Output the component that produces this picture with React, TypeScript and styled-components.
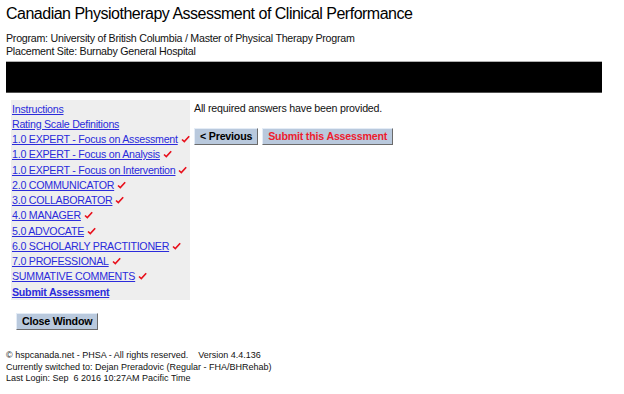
import React from 'react';
import styled, { createGlobalStyle } from 'styled-components';

const GlobalStyle = createGlobalStyle`
  html, body {
    margin: 0;
    padding: 0;
    background: #ffffff;
  }
  body {
    font-family: 'Liberation Sans', Arial, sans-serif;
    color: #000000;
  }
`;

const menuItems: { label: string; done: boolean }[] = [
  { label: 'Instructions', done: false },
  { label: 'Rating Scale Definitions', done: false },
  { label: '1.0 EXPERT - Focus on Assessment', done: true },
  { label: '1.0 EXPERT - Focus on Analysis', done: true },
  { label: '1.0 EXPERT - Focus on Intervention', done: true },
  { label: '2.0 COMMUNICATOR', done: true },
  { label: '3.0 COLLABORATOR', done: true },
  { label: '4.0 MANAGER', done: true },
  { label: '5.0 ADVOCATE', done: true },
  { label: '6.0 SCHOLARLY PRACTITIONER', done: true },
  { label: '7.0 PROFESSIONAL', done: true },
  { label: 'SUMMATIVE COMMENTS', done: true },
];

const Check: React.FC = () => (
  <CheckIcon width='9' height='8' viewBox='0 0 9 8'>
    <path d='M1 4.5 L3.3 6.6 L8.2 1.2' fill='none' stroke='#e8101c' strokeWidth='1.6' />
  </CheckIcon>
);

export default function App() {
  return (
    <Page>
      <GlobalStyle />
      <Title>Canadian Physiotherapy Assessment of Clinical Performance</Title>
      <Info>
        <div>Program: University of British Columbia / Master of Physical Therapy Program</div>
        <div>Placement Site: Burnaby General Hospital</div>
      </Info>
      <Banner />
      <Main>
        <Menu>
          {menuItems.map((item) => (
            <MenuRow key={item.label}>
              <MenuLink href='#'>{item.label}</MenuLink>
              {item.done && <Check />}
            </MenuRow>
          ))}
          <MenuRow>
            <MenuLink href='#' $bold>
              Submit Assessment
            </MenuLink>
          </MenuRow>
        </Menu>
        <Body>
          <Message>All required answers have been provided.</Message>
          <ButtonRow>
            <Button>&lt; Previous</Button>
            <Button $danger>Submit this Assessment</Button>
          </ButtonRow>
        </Body>
      </Main>
      <CloseRow>
        <Button>Close Window</Button>
      </CloseRow>
      <Footer>
        <div>© hspcanada.net - PHSA - All rights reserved.&nbsp;&nbsp;&nbsp;&nbsp;Version 4.4.136</div>
        <div>Currently switched to: Dejan Preradovic (Regular - FHA/BHRehab)</div>
        <div>Last Login: Sep&nbsp;&nbsp;6 2016 10:27AM Pacific Time</div>
      </Footer>
    </Page>
  );
}

const Page = styled.div`
  width: 624px;
  height: 394px;
  padding: 4px 0 0 6px;
  box-sizing: border-box;
  overflow: hidden;
`;

const Title = styled.h1`
  margin: 0;
  font-size: 16px;
  letter-spacing: -0.5px;
  font-weight: normal;
  line-height: 20px;
  color: #000000;
`;

const Info = styled.div`
  margin-top: 8px;
  font-size: 10.67px;
  letter-spacing: -0.25px;
  line-height: 13px;
  color: #111111;
`;

const Banner = styled.div`
  margin-top: 3px;
  width: 596px;
  height: 30px;
  background: #000000;
  border-top: 1px solid #b0b0b0;
  border-bottom: 1px solid #505050;
`;

const Main = styled.div`
  margin-top: 7px;
  display: flex;
  align-items: flex-start;
`;

const Menu = styled.div`
  margin-left: 5px;
  width: 179px;
  height: 200px;
  padding: 1px 0 0 1px;
  box-sizing: border-box;
  background: #eeeeee;
`;

const MenuRow = styled.div`
  display: flex;
  align-items: center;
  height: 15.25px;
  font-size: 10.67px;
  letter-spacing: -0.25px;
`;

const MenuLink = styled.a<{ $bold?: boolean }>`
  color: #2b2bdb;
  text-decoration: underline;
  font-weight: ${(p) => (p.$bold ? 'bold' : 'normal')};
  white-space: nowrap;
`;

const CheckIcon = styled.svg`
  margin-left: 3px;
  flex: none;
`;

const Body = styled.div`
  margin-left: 4px;
  padding-top: 2px;
`;

const Message = styled.div`
  font-size: 10.67px;
  letter-spacing: -0.2px;
  line-height: 13px;
  color: #111111;
`;

const ButtonRow = styled.div`
  margin-top: 13px;
  display: flex;
  gap: 4px;
`;

const Button = styled.button<{ $danger?: boolean }>`
  font-family: 'Liberation Sans', Arial, sans-serif;
  font-size: 10.67px;
  letter-spacing: -0.2px;
  font-weight: bold;
  line-height: 13px;
  padding: 1px 5px;
  background: #b9c9dd;
  color: ${(p) => (p.$danger ? '#ee1c2e' : '#000000')};
  border: 1px solid;
  border-color: #e4ecf6 #6b6b6b #6b6b6b #e4ecf6;
  cursor: pointer;
`;

const CloseRow = styled.div`
  margin-top: 11px;
  padding-left: 10px;
`;

const Footer = styled.div`
  margin-top: 20px;
  font-size: 9px;
  line-height: 11.5px;
  color: #111111;
`;
